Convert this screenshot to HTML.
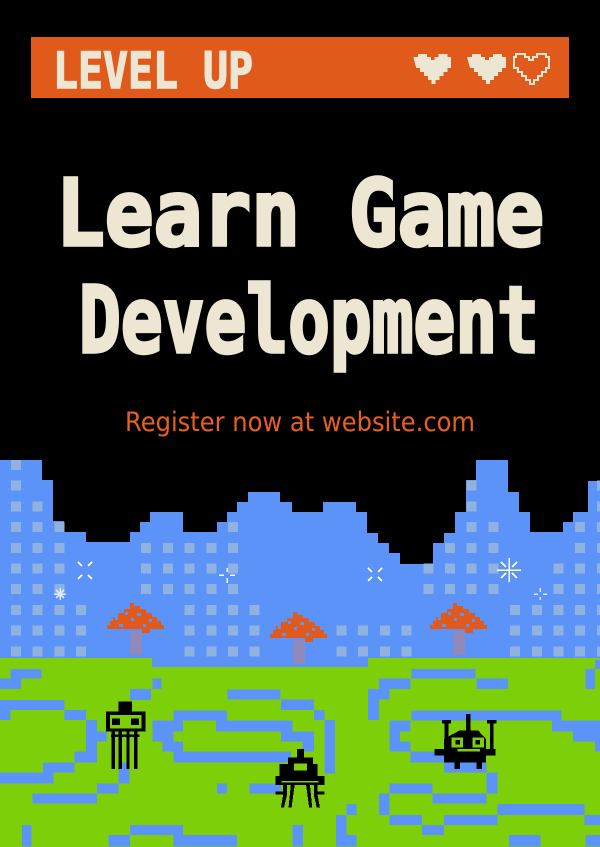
<!DOCTYPE html>
<html><head><meta charset="utf-8"><style>
html,body{margin:0;padding:0;background:#000;}
svg{display:block}
</style></head><body>
<svg width="600" height="847" viewBox="0 0 600 847" xmlns="http://www.w3.org/2000/svg" shape-rendering="crispEdges">
<rect width="600" height="847" fill="#000"/>
<!-- header -->
<rect x="31" y="37" width="538" height="61" fill="#df5a1b"/>
<text x="53" y="88" font-family="DejaVu Sans Mono, Liberation Mono, monospace" font-weight="bold" font-size="50" fill="#ece6d3" stroke="#ece6d3" stroke-width="1.5" textLength="200" lengthAdjust="spacingAndGlyphs">LEVEL UP</text>
<g fill="#ece6d3">
<path d="M423 57h5v-3h9v3h4v3h4v-3h4v-3h9v3h4v11h-4v4h-4v4h-4v4h-4v4h-4v-4h-4v-4h-4v-4h-4v-4h-4z" transform="translate(3,0) scale(0.97,1)"/>
<path d="M467 57h5v-3h9v3h4v3h4v-3h4v-3h9v3h4v11h-4v4h-4v4h-4v4h-4v4h-4v-4h-4v-4h-4v-4h-4v-4h-4z"/>
</g>
<path d="M513 57h3v-3h9v3h4v3h4v-3h4v-3h9v3h3v11h-3v4h-4v4h-4v4h-4v4h-4v-4h-4v-4h-4v-4h-4v-4h-4v-11z" fill="none" stroke="#ece6d3" stroke-width="2"/>
<!-- title -->
<text x="56" y="245" font-family="DejaVu Sans Mono, Liberation Mono, monospace" font-weight="bold" font-size="92" fill="#ece6d3" stroke="#ece6d3" stroke-width="3.5" textLength="488" lengthAdjust="spacingAndGlyphs">Learn Game</text>
<text x="79" y="352" font-family="DejaVu Sans Mono, Liberation Mono, monospace" font-weight="bold" font-size="92" fill="#ece6d3" stroke="#ece6d3" stroke-width="3.5" textLength="460" lengthAdjust="spacingAndGlyphs">Development</text>
<text x="125" y="431" font-family="DejaVu Sans, Liberation Sans, sans-serif" font-size="27" fill="#e8601f" textLength="350" lengthAdjust="spacingAndGlyphs">Register now at website.com</text>
<!-- skyline -->
<path fill="#5b93f9" d="M0 460H42V480H53V521H64V532H86V542H130V532H140V522H150V512H183V532H217V522H227V512H237V502H248V492H280V502H292V512H323V502H356V512H367V533H378V543H389V553H400V564H433V543H444V533H455V512H466V480H476V460H508V492H519V512H530V532H563V522H573V512H588V481H600V680H0Z"/>
<g id="win" fill="#8fb2e0"></g>
<!-- sparkles -->
<g stroke="#fff" stroke-width="1.5" fill="none">
<path d="M78 562l4 4M92 562l-4 4M78 579l4-4M92 579l-4-4"/>
<path d="M368 568l4 4M382 568l-4 4M368 581l4-4M382 581l-4-4"/>
<path d="M227 568v4M227 578v5M219 575h5M230 575h5"/>
<path d="M540 588v4M540 597v3M534 594h4M543 594h4" stroke="#dfe8ff"/>
<path d="M509 558v24M497 570h24M501 562l5 5M517 562l-5 5M501 578l5-5M517 578l-5-5"/>
<path d="M60 588v12M54 594h12M56 590l8 8M64 590l-8 8" stroke="#dfe8ff"/>
</g>
<!-- trees -->
<defs>
<g id="tree">
<path d="M0 22h3v-4h3v-4h5v-4h6v-4h6v-6h4v3h6v3h6v4h6v4h5v4h4v4h3v4H43v4H35v-4H0z" fill="#e05a1c"/>
<rect x="23" y="28" width="12" height="24" fill="#9a88b0" opacity="0.85"/>
<g fill="#5b93f9"><rect x="8" y="14" width="3" height="3"/><rect x="18" y="9" width="3" height="3"/><rect x="30" y="10" width="4" height="3"/><rect x="42" y="16" width="3" height="3"/><rect x="12" y="21" width="4" height="3"/><rect x="36" y="21" width="3" height="3"/><rect x="24" y="15" width="3" height="3"/></g>
</g>
</defs>
<use href="#tree" x="107" y="603"/>
<use href="#tree" x="270" y="612"/>
<use href="#tree" x="430" y="603"/>
<!-- ground -->
<path fill="#7dcf0a" d="M0 658H152V667H368V658H600V847H0Z"/>
<g transform="translate(0,650) scale(0.38265,0.33333)" fill="#5b93f9">
<rect x="27" y="57" width="81" height="29"/><rect x="0" y="86" width="55" height="31"/><rect x="398" y="86" width="24" height="31"/><rect x="340" y="117" width="55" height="33"/>
<rect x="0" y="150" width="168" height="30"/><rect x="0" y="180" width="27" height="30"/><rect x="168" y="180" width="57" height="30"/><rect x="225" y="210" width="28" height="95"/><rect x="253" y="245" width="27" height="30"/>
<rect x="195" y="305" width="58" height="32"/><rect x="112" y="337" width="83" height="31"/><rect x="0" y="368" width="140" height="32"/><rect x="310" y="337" width="28" height="63"/><rect x="253" y="400" width="57" height="30"/><rect x="85" y="430" width="168" height="30"/>
<rect x="595" y="118" width="138" height="30"/><rect x="735" y="148" width="85" height="32"/><rect x="820" y="180" width="28" height="30"/><rect x="848" y="210" width="28" height="160"/>
<rect x="453" y="182" width="140" height="30"/><rect x="398" y="212" width="80" height="33"/><rect x="398" y="245" width="55" height="30"/><rect x="425" y="275" width="53" height="30"/><rect x="453" y="305" width="307" height="32"/><rect x="565" y="212" width="200" height="33"/><rect x="735" y="245" width="85" height="30"/><rect x="790" y="275" width="30" height="30"/>
<rect x="567" y="400" width="26" height="30"/><rect x="652" y="400" width="83" height="30"/><rect x="57" y="525" width="25" height="65"/><rect x="340" y="525" width="138" height="30"/><rect x="283" y="555" width="57" height="35"/><rect x="453" y="555" width="167" height="35"/><rect x="765" y="525" width="27" height="65"/>
<rect x="905" y="462" width="27" height="33"/><rect x="878" y="495" width="27" height="95"/><rect x="905" y="555" width="27" height="35"/>
<rect x="1075" y="57" width="168" height="29"/><rect x="1245" y="86" width="83" height="31"/><rect x="990" y="86" width="83" height="31"/><rect x="962" y="117" width="56" height="31"/><rect x="962" y="148" width="28" height="62"/>
<rect x="1075" y="182" width="393" height="30"/><rect x="1018" y="212" width="55" height="33"/><rect x="1018" y="245" width="27" height="60"/><rect x="1045" y="275" width="28" height="30"/><rect x="1073" y="305" width="87" height="32"/><rect x="1160" y="337" width="112" height="31"/><rect x="1272" y="368" width="28" height="62"/>
<rect x="1443" y="212" width="125" height="33"/><rect x="1498" y="245" width="70" height="30"/><rect x="1555" y="275" width="13" height="30"/><rect x="1530" y="57" width="25" height="60"/><rect x="1555" y="30" width="13" height="27"/>
<rect x="1018" y="400" width="112" height="30"/><rect x="990" y="430" width="28" height="65"/><rect x="1130" y="430" width="142" height="30"/><rect x="1018" y="495" width="85" height="30"/><rect x="1103" y="525" width="57" height="30"/><rect x="1160" y="495" width="140" height="30"/><rect x="1300" y="462" width="228" height="33"/><rect x="1528" y="495" width="40" height="30"/><rect x="1330" y="555" width="83" height="35"/><rect x="1530" y="555" width="38" height="35"/>
<!-- characters -->
<g fill="#000">
<rect x="310" y="155" width="35" height="30"/><rect x="277" y="185" width="103" height="60"/>
<rect x="290" y="253" width="75" height="8"/>
<rect x="292" y="245" width="9" height="112"/><rect x="310" y="245" width="9" height="112"/><rect x="330" y="245" width="9" height="112"/><rect x="350" y="245" width="9" height="112"/>
<rect x="776" y="297" width="18" height="25"/><path d="M752 322h66v20h12v38h-100v-38h22z"/>
<rect x="720" y="378" width="128" height="27"/>
<path d="M740 405h10v30l-8 38h-8l6-38zM760 405h10l-8 68h-8zM800 405h10l6 68h-8zM820 405h10v30l6 38h-8l-8-38z"/>
<rect x="720" y="425" width="22" height="8"/><rect x="826" y="425" width="22" height="8"/>
<rect x="1218" y="192" width="12" height="50"/><path d="M1200 242h50l20 25v30h25v20h-25v20h-110v-20h-25v-20h25v-30z"/>
<rect x="1162" y="210" width="10" height="90"/><rect x="1280" y="210" width="10" height="90"/><rect x="1155" y="210" width="24" height="10"/><rect x="1273" y="210" width="24" height="10"/>
<rect x="1188" y="335" width="14" height="22"/><rect x="1245" y="335" width="14" height="22"/>
</g>
<g fill="#7dcf0a">
<rect x="287" y="195" width="83" height="40"/><rect x="768" y="340" width="34" height="22"/><rect x="736" y="393" width="96" height="5"/>
<rect x="1180" y="262" width="30" height="30"/><rect x="1235" y="262" width="30" height="30"/><rect x="1195" y="297" width="60" height="8"/>
</g>
<g fill="#000"><rect x="293" y="205" width="20" height="20"/><rect x="343" y="205" width="20" height="20"/><rect x="775" y="365" width="20" height="25"/><rect x="1190" y="270" width="12" height="14"/><rect x="1243" y="270" width="12" height="14"/></g>
</g>
</svg>
<script>
(function(){
var starts=[0,2,3,7,9,8,4,4,4,4,3,7,7,8,7,8,8,8,8,5,4,1,3,7,7,5,3,1];
var trees=[[103,170,600,656],[266,333,609,664],[426,493,600,656]];
var g=document.getElementById('win'),h='';
for(var i=0;i<starts.length;i++){var x=11+i*21.7;
for(var r=starts[i];r<10;r++){var y=460+r*20.7;
var skip=false;trees.forEach(function(t){if(x+10>t[0]&&x<t[1]&&y+10>t[2]&&y<t[3])skip=true;});
if(skip)continue;
h+='<rect x="'+x.toFixed(1)+'" y="'+y.toFixed(1)+'" width="10" height="10"/>';}}
g.innerHTML=h;
})();
</script>
</body></html>
